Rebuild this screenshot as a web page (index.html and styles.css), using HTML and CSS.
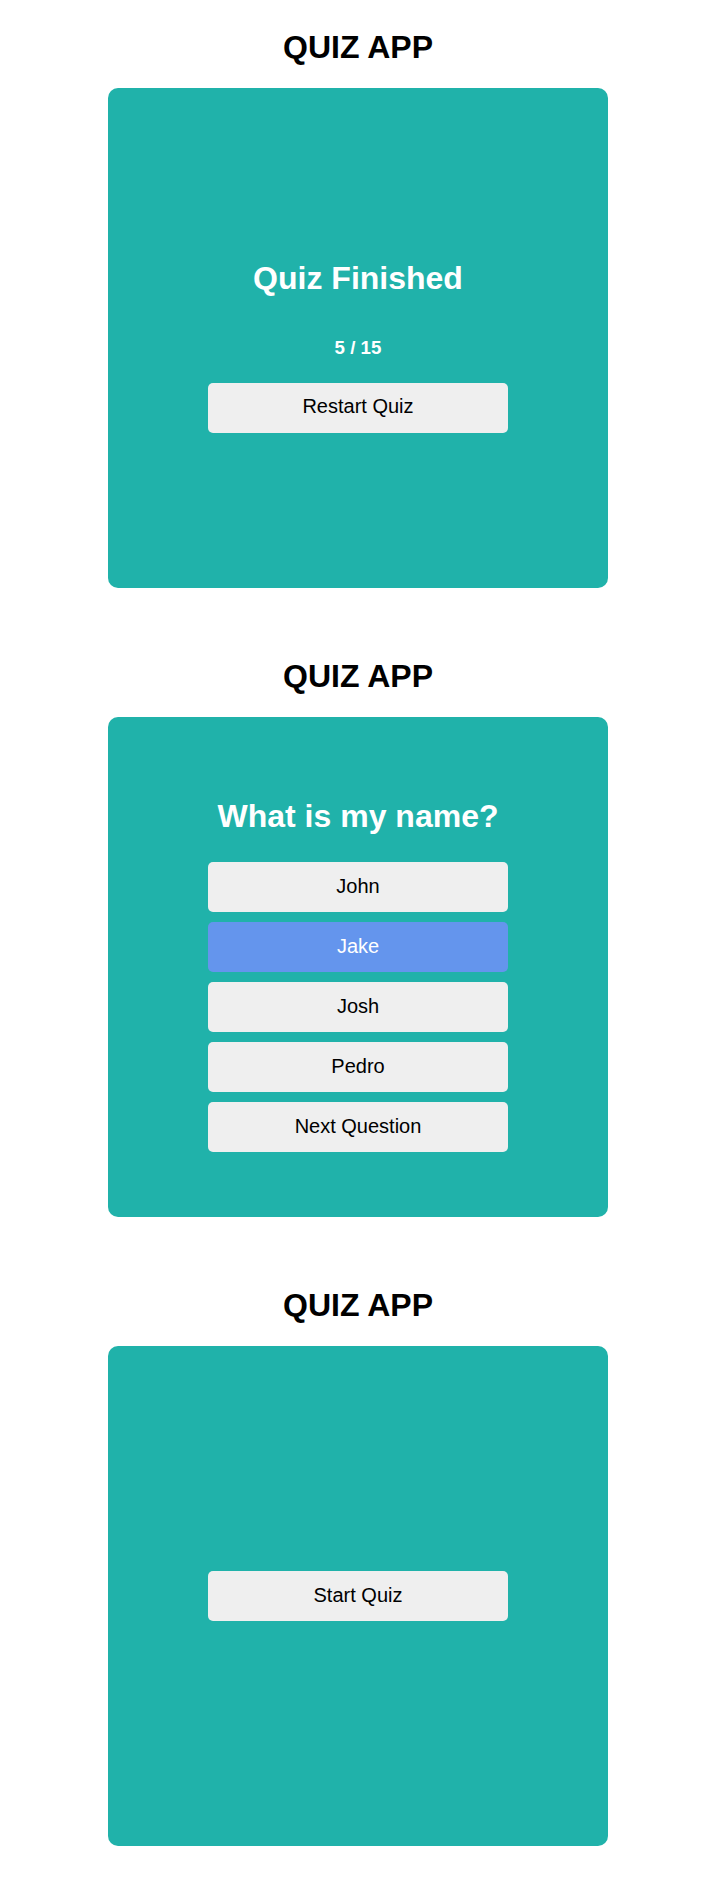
FILE: index.html
```html
<!DOCTYPE html>
<html lang="en">
<head>
<meta charset="utf-8">
<title>Quiz App</title>
<link rel="stylesheet" href="styles.css">
</head>
<body>
<main class="page">
  <section class="app">
    <h1 class="app-title">QUIZ APP</h1>
    <div class="card">
      <h2 class="card-title">Quiz Finished</h2>
      <h3 class="score">5 / 15</h3>
      <button class="btn btn-restart">Restart Quiz</button>
    </div>
  </section>

  <section class="app">
    <h1 class="app-title">QUIZ APP</h1>
    <div class="card">
      <h2 class="card-title question">What is my name?</h2>
      <div class="answers">
        <button class="btn">John</button>
        <button class="btn selected">Jake</button>
        <button class="btn">Josh</button>
        <button class="btn">Pedro</button>
        <button class="btn">Next Question</button>
      </div>
    </div>
  </section>

  <section class="app">
    <h1 class="app-title">QUIZ APP</h1>
    <div class="card">
      <button class="btn">Start Quiz</button>
    </div>
  </section>
</main>
</body>
</html>
```

FILE: styles.css
```css
html, body {
  margin: 0;
  padding: 0;
  background: #ffffff;
}

body {
  font-family: "Liberation Sans", Arial, sans-serif;
  color: #000;
}

.page {
  display: flex;
  flex-direction: column;
  align-items: center;
  gap: 70px;
  padding: 29px 0 40px 14px;
}

.app {
  display: flex;
  flex-direction: column;
  align-items: center;
}

.app-title {
  margin: 0 0 22px;
  font-size: 32px;
  line-height: 37px;
  font-weight: 700;
  color: #000;
}

.card {
  width: 500px;
  height: 500px;
  box-sizing: border-box;
  background: #20b2aa;
  border-radius: 10px;
  display: flex;
  flex-direction: column;
  align-items: center;
  justify-content: center;
}

.card-title {
  margin: 16px 0 0;
  font-size: 32px;
  line-height: 37px;
  font-weight: 700;
  color: #fff;
}

.score {
  margin: 40px 0 0;
  font-size: 18.72px;
  line-height: 22px;
  font-weight: 700;
  color: #fff;
}

.btn {
  width: 300px;
  height: 50px;
  box-sizing: border-box;
  border: none;
  border-radius: 5px;
  background: #efefef;
  color: #000;
  font-family: "Liberation Sans", Arial, sans-serif;
  font-size: 20px;
  line-height: 23px;
  padding: 0 0 2px;
  display: flex;
  align-items: center;
  justify-content: center;
  cursor: pointer;
}

.btn-restart {
  margin-top: 24px;
}

.answers {
  margin-top: 27px;
  display: flex;
  flex-direction: column;
  gap: 10px;
}

.btn.selected {
  background: #6495ed;
  color: #fff;
}
```
